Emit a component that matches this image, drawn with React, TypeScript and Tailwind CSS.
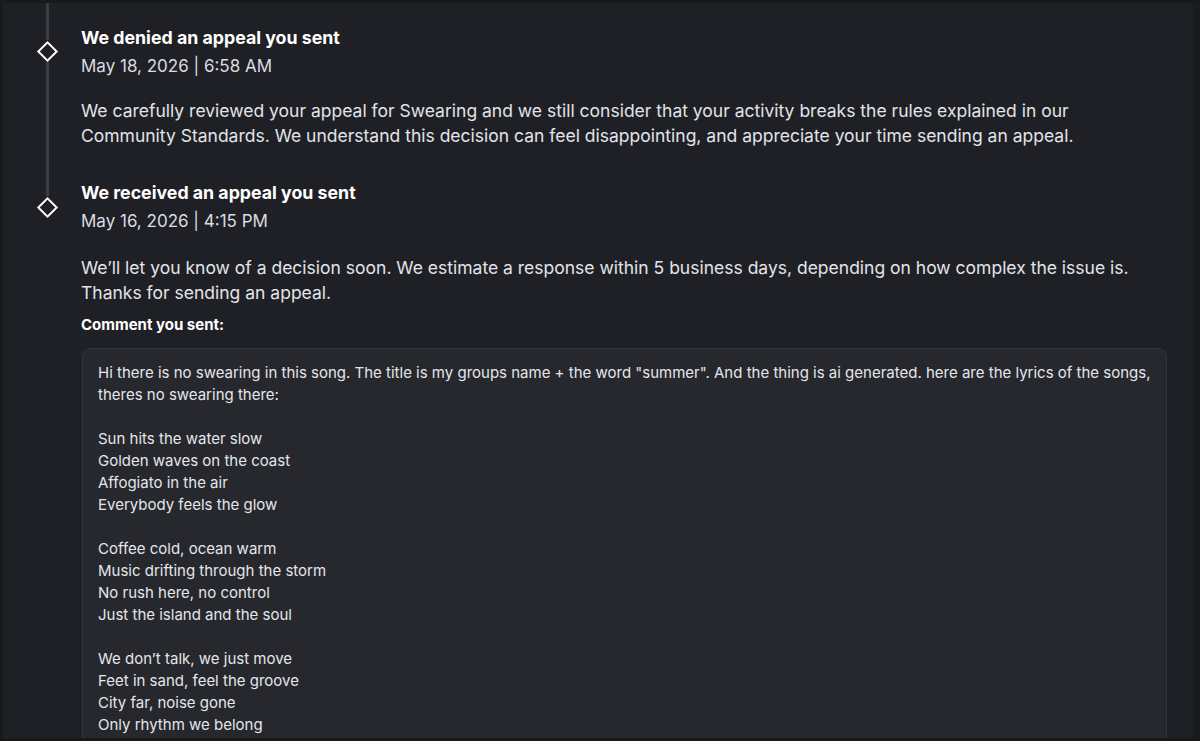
import React from "react";

const font = { fontFamily: "Inter, 'Noto Sans', sans-serif" };

function Diamond() {
  return (
    <div className="flex h-[22px] w-[22px] shrink-0 items-center justify-center">
      <div className="h-[15px] w-[15px] rotate-45 border-2 border-white" />
    </div>
  );
}

function Rail({ children }: { children: React.ReactNode }) {
  return (
    <div className="flex w-[78px] shrink-0 flex-col items-start self-stretch">
      <div className="ml-[33px] flex w-[22px] flex-1 flex-col items-center">{children}</div>
    </div>
  );
}

const lyrics = [
  "Hi there is no swearing in this song. The title is my groups name + the word \"summer\". And the thing is ai generated. here are the lyrics of the songs,",
  "theres no swearing there:",
  "",
  "Sun hits the water slow",
  "Golden waves on the coast",
  "Affogiato in the air",
  "Everybody feels the glow",
  "",
  "Coffee cold, ocean warm",
  "Music drifting through the storm",
  "No rush here, no control",
  "Just the island and the soul",
  "",
  "We don\u2019t talk, we just move",
  "Feet in sand, feel the groove",
  "City far, noise gone",
  "Only rhythm we belong",
];

export default function App() {
  return (
    <div className="flex h-[741px] w-[1200px] flex-col overflow-hidden bg-[#18191d]" style={font}>
      <div className="h-[3px] shrink-0" />
      <div className="flex min-h-0 flex-1">
        <div className="w-[3px] shrink-0" />
        <main className="flex min-w-0 flex-1 flex-col overflow-hidden bg-[#1f2025]">
          {/* denied */}
          <section className="flex">
            <Rail>
              <div className="h-[37px] w-[3px] bg-[#3b3c42]" />
              <Diamond />
              <div className="w-[3px] flex-1 bg-[#3b3c42]" />
            </Rail>
            <div className="pt-[21px]">
              <h2 className="text-[17.75px] font-bold leading-[28px] text-white">We denied an appeal you sent</h2>
              <p className="text-[17px] leading-[28px] text-[#dadce1]">May 18, 2026 | 6:58 AM</p>
              <p className="mt-[18px] text-[17.5px] leading-[25px] text-[#e2e4e9]">
                We carefully reviewed your appeal for Swearing and we still consider that your activity breaks the rules explained in our
                <br />
                Community Standards. We understand this decision can feel disappointing, and appreciate your time sending an appeal.
              </p>
            </div>
          </section>

          {/* received */}
          <section className="flex">
            <Rail>
              <div className="h-[48px] w-[3px] bg-[#3b3c42]" />
              <Diamond />
            </Rail>
            <div className="flex-1 pr-[26px] pt-[31px]">
              <h2 className="text-[17.75px] font-bold leading-[28px] text-white">We received an appeal you sent</h2>
              <p className="text-[17px] leading-[28px] text-[#dadce1]">May 16, 2026 | 4:15 PM</p>
              <p className="mt-[20px] text-[17.5px] leading-[25px] text-[#e2e4e9]">
                We’ll let you know of a decision soon. We estimate a response within 5 business days, depending on how complex the issue is.
                <br />
                Thanks for sending an appeal.
              </p>
              <h3 className="mt-[9px] text-[15px] font-bold leading-[22px] text-white">Comment you sent:</h3>
              <div className="mt-[12px] ml-px rounded-[9px] border border-[#34353b] bg-[#27282d] px-[15px] pb-10 pt-[13px]">
                {lyrics.map((l, i) => (
                  <p key={i} className="h-[22px] text-[15px] leading-[22px] text-[#e4e6eb]">
                    {l}
                  </p>
                ))}
              </div>
            </div>
          </section>
        </main>
        <div className="w-[7px] shrink-0 bg-[#1a1b1f]" />
      </div>
      <div className="h-[3px] shrink-0" />
    </div>
  );
}
